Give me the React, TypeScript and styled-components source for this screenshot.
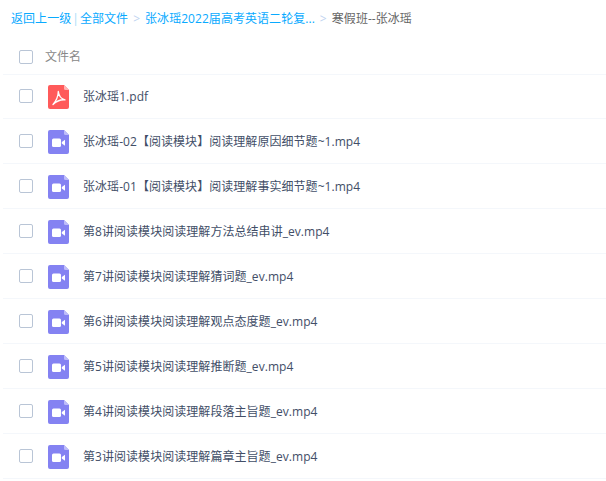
import React from 'react'
import styled, { createGlobalStyle } from 'styled-components'

const GlobalStyle = createGlobalStyle`
    html, body {
        margin: 0;
        padding: 0;
        background: #fff;
        overflow: hidden;
    }
    body {
        font-family: "Open Sans", "Noto Sans CJK SC", sans-serif;
        font-size: 12px;
        letter-spacing: 0.05px;
    }
`

const Page = styled.div`
    width: 606px;
    height: 481px;
    padding-left: 3px;
    box-sizing: border-box;
    overflow: hidden;
`

const Breadcrumb = styled.div`
    display: flex;
    align-items: center;
    height: 36px;
    padding-left: 8px;
    color: #666;
    white-space: nowrap;
`

const CrumbLink = styled.span`
    color: #09aaff;
`

const Pipe = styled.span`
    color: #a9dcf8;
    margin: 0 1px;
`

const Chevron = styled.span`
    color: #c0d3f0;
    margin: 0 5px;
    font-size: 12px;
`

const Row = styled.div<{ $header?: boolean }>`
    display: flex;
    align-items: center;
    box-sizing: border-box;
    height: ${p => (p.$header ? '38.5px' : '44.9px')};
    padding-top: ${p => (p.$header ? '4px' : '0')};
    border-bottom: 1px solid #f4f7fb;
    padding-left: 16px;
    color: ${p => (p.$header ? '#888' : '#424e67')};
`

const Check = styled.span`
    box-sizing: border-box;
    width: 14px;
    height: 14px;
    border: 1px solid #b9c5d6;
    border-radius: 2px;
    flex: none;
`

const HeaderLabel = styled.span`
    margin: 0 0 2px 12px;
`

const IconSlot = styled.span`
    display: flex;
    margin: 2px 0 0 15px;
    flex: none;
`

const FileName = styled.span`
    margin-left: 14px;
    white-space: nowrap;
`

const PdfIcon = () => (
    <svg width="21" height="24" viewBox="0 0 21 24">
        <path d="M2 0H16L21 5V22a2 2 0 0 1-2 2H2a2 2 0 0 1-2-2V2a2 2 0 0 1 2-2z" fill="#ff5a5a" />
        <path d="M16 0L21 5H17.500a1.500 1.500 0 0 1-1.500-1.500z" fill="#ffb3b3" />
        <path
            d="M10.300 6.500C10.200 10.500 8.500 15.500 5 19.500M10.300 6.500C10.800 10.500 12.800 13.800 17 14.800C13 14.400 8.800 15.800 5 19.500"
            fill="none"
            stroke="#fff"
            strokeWidth="1.300"
            strokeLinecap="round"
            strokeLinejoin="round"
        />
    </svg>
)

const VideoIcon = () => (
    <svg width="21" height="24" viewBox="0 0 21 24">
        <path d="M2 0H16L21 5V22a2 2 0 0 1-2 2H2a2 2 0 0 1-2-2V2a2 2 0 0 1 2-2z" fill="#8482f2" />
        <path d="M16 0L21 5H17.500a1.500 1.500 0 0 1-1.500-1.500z" fill="#bdbcf9" />
        <rect x="4" y="8.500" width="9" height="8.500" rx="1.500" fill="#fff" />
        <path d="M13.800 12L17 9.800V15.700L13.800 13.500z" fill="#fff" />
    </svg>
)

const files = [
    '张冰瑶1.pdf',
    '张冰瑶-02【阅读模块】阅读理解原因细节题~1.mp4',
    '张冰瑶-01【阅读模块】阅读理解事实细节题~1.mp4',
    '第8讲阅读模块阅读理解方法总结串讲_ev.mp4',
    '第7讲阅读模块阅读理解猜词题_ev.mp4',
    '第6讲阅读模块阅读理解观点态度题_ev.mp4',
    '第5讲阅读模块阅读理解推断题_ev.mp4',
    '第4讲阅读模块阅读理解段落主旨题_ev.mp4',
    '第3讲阅读模块阅读理解篇章主旨题_ev.mp4',
]

function App() {
    return (
        <Page>
            <GlobalStyle />
            <Breadcrumb>
                <CrumbLink>返回上一级</CrumbLink>
                <Pipe>|</Pipe>
                <CrumbLink>全部文件</CrumbLink>
                <Chevron>&gt;</Chevron>
                <CrumbLink>张冰瑶2022届高考英语二轮复...</CrumbLink>
                <Chevron>&gt;</Chevron>
                <span>寒假班--张冰瑶</span>
            </Breadcrumb>
            <Row $header>
                <Check />
                <HeaderLabel>文件名</HeaderLabel>
            </Row>
            {files.map(name => (
                <Row key={name}>
                    <Check />
                    <IconSlot>{name.endsWith('.pdf') ? <PdfIcon /> : <VideoIcon />}</IconSlot>
                    <FileName>{name}</FileName>
                </Row>
            ))}
        </Page>
    )
}

export default App
